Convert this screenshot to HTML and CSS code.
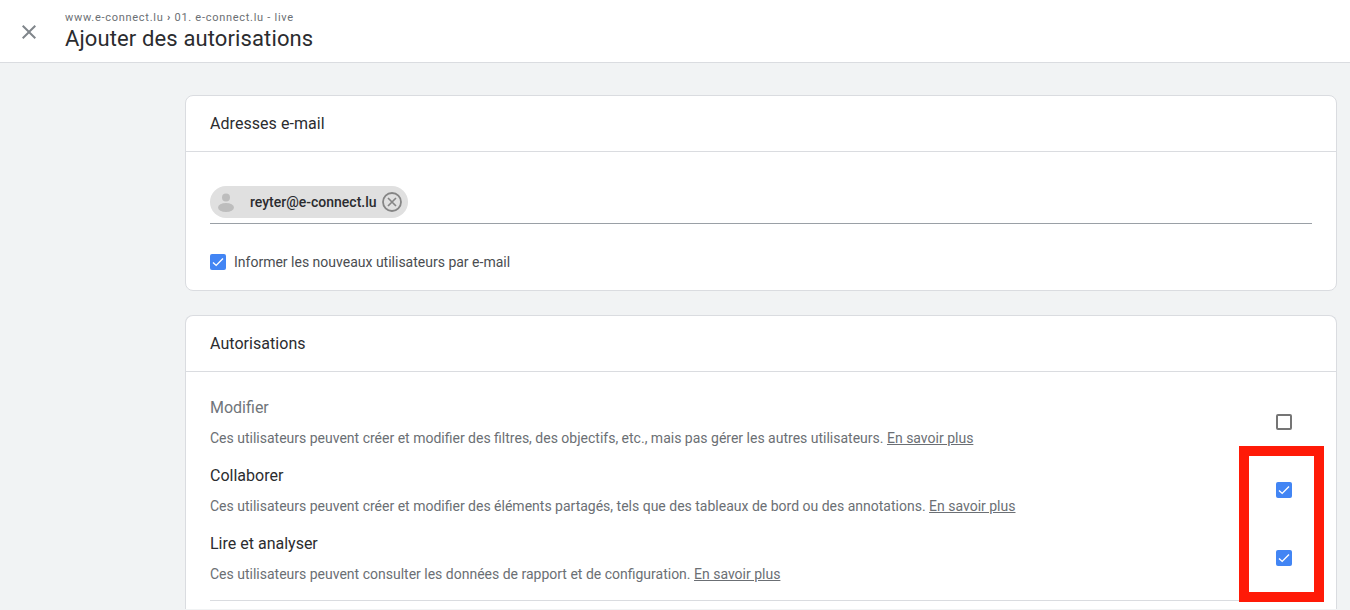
FILE: index.html
```html
<!DOCTYPE html>
<html lang="fr">
<head>
<meta charset="utf-8">
<title>Ajouter des autorisations</title>
<link rel="stylesheet" href="styles.css">
</head>
<body>
<header class="topbar">
  <button class="close" aria-label="Fermer">
    <svg width="24" height="24" viewBox="0 0 24 24"><path d="M19 6.41 17.59 5 12 10.59 6.41 5 5 6.41 10.59 12 5 17.59 6.41 19 12 13.41 17.59 19 19 17.59 13.41 12z" fill="#80868b"/></svg>
  </button>
  <div class="titles">
    <div class="crumb">www.e-connect.lu<span class="sep">›</span>01. e-connect.lu - live</div>
    <h1 class="title">Ajouter des autorisations</h1>
  </div>
</header>
<main class="main">
  <section class="card">
    <h2 class="card-head">Adresses e-mail</h2>
    <div class="email-body">
      <div class="field">
        <div class="chip">
          <svg class="avatar" width="24" height="24" viewBox="0 0 24 24"><circle cx="12" cy="7.5" r="4" fill="#bdbdbd"/><ellipse cx="12" cy="17.5" rx="8" ry="4.5" fill="#bdbdbd"/></svg>
          <span class="chip-text">reyter@e-connect.lu</span>
          <svg class="chip-x" width="20" height="20" viewBox="0 0 20 20"><circle cx="10" cy="10" r="9" fill="none" stroke="#858585" stroke-width="1.8"/><path d="M6 6l8 8M14 6l-8 8" stroke="#858585" stroke-width="1.7" fill="none"/></svg>
        </div>
      </div>
      <label class="notify">
        <span class="box on"><svg width="16" height="16" viewBox="0 0 16 16"><path d="M3 8.4l3.2 3L13 4.6" fill="none" stroke="#fff" stroke-width="1.4"/></svg></span>
        <span>Informer les nouveaux utilisateurs par e-mail</span>
      </label>
    </div>
  </section>
  <section class="card card-perms">
    <h2 class="card-head">Autorisations</h2>
    <div class="perms">
      <div class="perm">
        <div class="perm-text">
          <div class="perm-name muted">Modifier</div>
          <p class="perm-desc">Ces utilisateurs peuvent créer et modifier des filtres, des objectifs, etc., mais pas gérer les autres utilisateurs. <a href="#">En savoir plus</a></p>
        </div>
        <span class="box off"></span>
      </div>
      <div class="perm">
        <div class="perm-text">
          <div class="perm-name">Collaborer</div>
          <p class="perm-desc">Ces utilisateurs peuvent créer et modifier des éléments partagés, tels que des tableaux de bord ou des annotations. <a href="#">En savoir plus</a></p>
        </div>
        <span class="box on"><svg width="16" height="16" viewBox="0 0 16 16"><path d="M3 8.4l3.2 3L13 4.6" fill="none" stroke="#fff" stroke-width="1.4"/></svg></span>
      </div>
      <div class="perm">
        <div class="perm-text">
          <div class="perm-name">Lire et analyser</div>
          <p class="perm-desc">Ces utilisateurs peuvent consulter les données de rapport et de configuration. <a href="#">En savoir plus</a></p>
        </div>
        <span class="box on"><svg width="16" height="16" viewBox="0 0 16 16"><path d="M3 8.4l3.2 3L13 4.6" fill="none" stroke="#fff" stroke-width="1.4"/></svg></span>
      </div>
    </div>
    <div class="rule"></div>
  </section>
</main>
<div class="highlight"></div>
</body>
</html>
```
FILE: styles.css
```css
* { box-sizing: border-box; }
html, body { margin: 0; height: 610px; overflow: hidden; }
body {
  background: #f1f3f4;
  font-family: Roboto, "Liberation Sans", sans-serif;
  color: #202124;
  position: relative;
}
.topbar {
  height: 63px;
  background: #fff;
  border-bottom: 1px solid #dadce0;
  display: flex;
  align-items: center;
  padding-left: 17px;
}
.close {
  width: 24px;
  height: 24px;
  padding: 0;
  border: 0;
  background: none;
  margin-right: 24px;
  margin-top: 1px;
}
.close svg { display: block; }
.titles { margin-top: 1px; }
.crumb {
  font-size: 11px;
  line-height: 13px;
  letter-spacing: .72px;
  color: #6b6f74;
}
.sep { margin: 0 3.5px; font-size: 11px; font-weight: 700; color: #5f6368; }
.title {
  margin: 0;
  font-size: 22px;
  font-weight: 400;
  line-height: 29px;
  letter-spacing: .12px;
  color: #2b2c2f;
}
.main { padding: 32px 13px 0 185px; }
.card {
  background: #fff;
  border: 1px solid #dadce0;
  border-radius: 8px;
  margin-bottom: 24px;
}
.card-head {
  margin: 0;
  height: 56px;
  padding: 0 24px;
  display: flex;
  align-items: center;
  font-size: 16px;
  font-weight: 400;
  letter-spacing: .05px;
  border-bottom: 1px solid #dadce0;
  color: #2b2c2f;
}
.email-body { padding: 34px 24px 0; height: 138px; }
.field {
  border-bottom: 1px solid #9aa0a6;
  height: 38px;
}
.chip {
  display: inline-flex;
  align-items: center;
  height: 32px;
  width: 198px;
  background: #e0e0e0;
  border-radius: 16px;
  padding-left: 4px;
}
.avatar { flex: none; margin-right: 12px; }
.chip-text {
  font-size: 14px;
  font-weight: 500;
  color: #2b2c2f;
  flex: none;
}
.chip-x { flex: none; margin-left: 5.5px; }
.notify {
  display: flex;
  align-items: center;
  gap: 8px;
  margin-top: 30px;
  font-size: 14px;
  color: #4a4d51;
}
.box {
  width: 16px;
  height: 16px;
  border-radius: 2px;
  flex: none;
  display: block;
}
.box svg { display: block; }
.box.on { background: #4285f4; }
.box.off { border: 2px solid #757575; }
.card-perms { border-bottom: 0; border-radius: 8px 8px 0 0; }
.perms { padding: 16px 24px 0; }
.perm {
  height: 68px;
  display: flex;
  align-items: center;
  justify-content: space-between;
  padding-right: 20px;
}
.perm-text { padding-top: 1px; }
.perm-name {
  font-size: 16px;
  line-height: 22px;
  color: #2b2c2f;
}
.perm-name.muted { color: #70757a; }
.perm-desc {
  margin: 8px 0 0;
  font-size: 14px;
  line-height: 22px;
  color: #6b6f74;
}
.perm-desc a { color: #6b6f74; text-decoration: underline; }
.rule { margin: 8px 24px 0; border-top: 1px solid #dadce0; height: 9px; }
.highlight {
  position: absolute;
  left: 1239px;
  top: 446px;
  width: 85px;
  height: 156px;
  border: 10px solid #ff1a07;
}
```
